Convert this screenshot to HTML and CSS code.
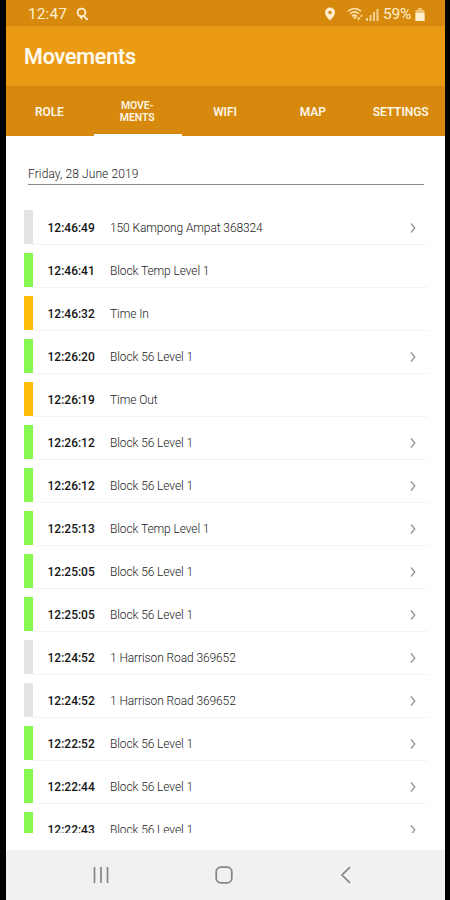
FILE: index.html
```html
<!DOCTYPE html>
<html lang="en">
<head>
<meta charset="utf-8">
<title>Movements</title>
<link rel="stylesheet" href="styles.css">
</head>
<body>
<div class="screen">
  <div class="status">
    <span class="clock">12:47</span>
    <svg class="search-pin" width="13" height="15" viewBox="0 0 13 15"><circle cx="5.5" cy="5.5" r="3.9" fill="none" stroke="#ffefcf" stroke-width="1.8"/><path d="M3 8.5L5.5 13L7.5 8.5Z" fill="#ffefcf"/><path d="M8 9l2 2.500" stroke="#ffefcf" stroke-width="2"/><circle cx="10.800" cy="12" r="1.200" fill="#ffefcf"/></svg>
    <span class="spacer"></span>
    <svg class="pin" width="12" height="14" viewBox="0 0 12 14"><path fill="#ffefcf" fill-rule="evenodd" d="M6 .5a5 5 0 0 0-5 5C1 8.7 6 13.5 6 13.5s5-4.800 5-8a5 5 0 0 0-5-5zm0 3.200a1.800 1.800 0 1 1 0 3.600 1.800 1.800 0 0 1 0-3.600z"/></svg>
    <svg class="wifi" width="17" height="14" viewBox="0 0 17 14"><g fill="none" stroke="#ffe3b0" stroke-width="1.500"><path d="M1 4.200Q7.500-1.200 14 4.200M3 6.800Q7.500 3 12 6.800M5 9.200Q7.500 7 10 9.200"/></g><path d="M5.800 9.500L8 12.500L9.800 9.500ZM10 10.500h3.500L11.700 13.500ZM13 9.500l1.500-2L16 9.500Z" fill="#ffe3b0"/></svg>
    <svg class="signal" width="13" height="13" viewBox="0 0 13 13"><path d="M0 10h2v3H0zM3.500 7h2v6h-2zM7 4h2v9H7zM10.500 1h2v12h-2z" fill="#f7d294"/></svg>
    <span class="percent">59%</span>
    <svg class="battery" width="10" height="13" viewBox="0 0 10 13"><path d="M3 0h4v2h2.500v11h-9V2H3z" fill="#f2c577"/><path d="M.5 5h9v8h-9z" fill="#ffefcf"/></svg>
  </div>
  <header class="title">Movements</header>
  <nav class="tabs">
    <div class="tab">ROLE</div>
    <div class="tab active"><span>MOVE-<br>MENTS</span></div>
    <div class="tab">WIFI</div>
    <div class="tab">MAP</div>
    <div class="tab">SETTINGS</div>
  </nav>
  <main class="content">
    <div class="date">Friday, 28 June 2019</div>
    <div class="list" id="list"></div>
  </main>
  <footer class="navbar">
    <svg width="18" height="18" viewBox="0 0 18 18"><path d="M2.500 1v16M9 1v16M15.500 1v16" stroke="#858585" stroke-width="1.700"/></svg>
    <svg width="18" height="18" viewBox="0 0 18 18"><rect x="1.200" y="1.200" width="15.600" height="15.600" rx="4.500" fill="none" stroke="#858585" stroke-width="1.700"/></svg>
    <svg width="18" height="18" viewBox="0 0 18 18"><path d="M13 1.200L5 9l8 7.800" fill="none" stroke="#858585" stroke-width="1.700"/></svg>
  </footer>
</div>
<script src="list.js"></script>
</body>
</html>
```
FILE: styles.css
```css
* { box-sizing: border-box; }
body { margin: 0; background: #000; font-family: Roboto, "Liberation Sans", sans-serif; }
.screen { width: 439px; height: 900px; margin-left: 6px; background: #fff; display: flex; flex-direction: column; overflow: hidden; }
.status { height: 26px; flex: none; background: #d6890d; color: #ffefcf; display: flex; align-items: center; padding: 2px 20px 0 22px; font-size: 15.500px; }
.clock { width: 48px; letter-spacing: .1px; }
.spacer { flex: 1; }
.pin { margin-right: 11px; }
.wifi { margin-right: 2px; }
.signal { margin-right: 4px; }
.percent { width: 32px; font-size: 15.500px; letter-spacing: -.2px; }
.title { height: 60px; flex: none; background: #eb9a13; color: #fffaf0; font-size: 21.500px; font-weight: 500; letter-spacing: -.15px; line-height: 61px; padding-left: 18px; -webkit-text-stroke: .2px #fffaf0; }
.tabs { height: 50px; flex: none; background: #d6890d; display: grid; grid-template-columns: repeat(5, 1fr); color: #fff5e3; font-weight: 600; font-size: 12px; letter-spacing: -.1px; text-align: center; }
.tab { display: flex; align-items: center; justify-content: center; padding: 2px 1px 0 0; }
.active { font-size: 10.500px; line-height: 12px; border-bottom: 2px solid #fff; padding-top: 3px; }
.content { height: 714px; flex: none; padding: 28px 17px 0 18px; }
.date { height: 21px; margin: 0 4px; border-bottom: 1px solid #888; font-size: 12px; font-weight: 300; letter-spacing: .1px; line-height: 20px; color: #222; }
.list { height: 648px; overflow: hidden; padding-top: 25px; }
.row { height: 43px; display: flex; align-items: flex-start; }
.bar { width: 9px; height: 34px; flex: none; }
.gray { background: #e4e4e4; }
.green { background: #86f850; }
.amber { background: #ffbd0a; }
.body { flex: 1; height: 35px; border-bottom: 1px solid #f4f4f4; display: flex; align-items: center; padding: 2px 11px 0 14.500px; }
.time { width: 62.500px; font-size: 12px; font-weight: 500; color: #151515; }
.place { flex: 1; font-size: 12px; font-weight: 300; letter-spacing: -.1px; color: #222; }
.navbar { height: 50px; flex: none; background: #f1f1f1; display: flex; align-items: center; justify-content: space-between; padding: 0 90px 0 86px; }
```
FILE: list.js
```js
const rows = [
  ["12:46:49", "150 Kampong Ampat 368324", "gray", true],
  ["12:46:41", "Block Temp Level 1", "green", false],
  ["12:46:32", "Time In", "amber", false],
  ["12:26:20", "Block 56 Level 1", "green", true],
  ["12:26:19", "Time Out", "amber", false],
  ["12:26:12", "Block 56 Level 1", "green", true],
  ["12:26:12", "Block 56 Level 1", "green", true],
  ["12:25:13", "Block Temp Level 1", "green", true],
  ["12:25:05", "Block 56 Level 1", "green", true],
  ["12:25:05", "Block 56 Level 1", "green", true],
  ["12:24:52", "1 Harrison Road 369652", "gray", true],
  ["12:24:52", "1 Harrison Road 369652", "gray", true],
  ["12:22:52", "Block 56 Level 1", "green", true],
  ["12:22:44", "Block 56 Level 1", "green", true],
  ["12:22:43", "Block 56 Level 1", "green", true]
];
const chevron = '<svg width="8" height="12" viewBox="0 0 8 12"><path d="M2 1.500L5.800 6L2 10.500" fill="none" stroke="#909090" stroke-width="1.200"/></svg>';
document.getElementById("list").innerHTML = rows.map(([time, place, color, link]) =>
  `<div class="row"><div class="bar ${color}"></div><div class="body"><span class="time">${time}</span><span class="place">${place}</span>${link ? chevron : ""}</div></div>`
).join("");
```
